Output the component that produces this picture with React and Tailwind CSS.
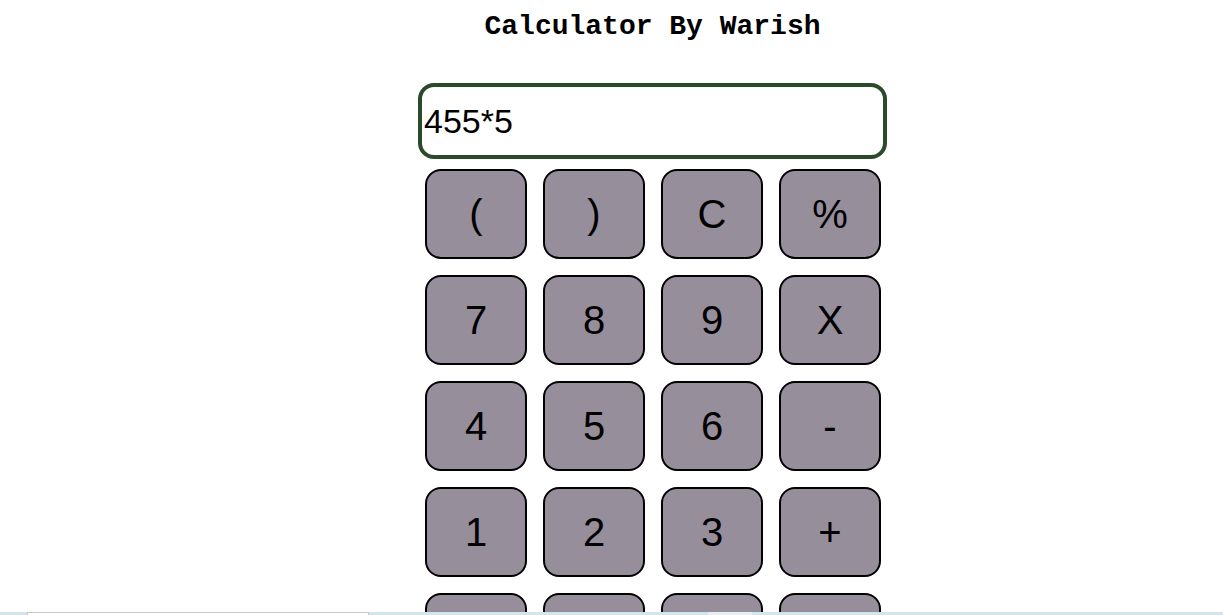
import React, { useState } from 'react';

const keys = ['(', ')', 'C', '%', '7', '8', '9', 'X', '4', '5', '6', '-', '1', '2', '3', '+', '0', '.', '=', '/'];

function App() {
  const [value, setValue] = useState('455*5');

  return (
    <div className="min-h-screen w-full bg-white text-black">
      <div className="w-[469px] ml-[418px]">
        <h1 className="text-center font-bold text-[28px] leading-[34px] pt-[10px] font-['Courier_New','Liberation_Mono',monospace]">
          Calculator By Warish
        </h1>
        <input
          value={value}
          onChange={(e) => setValue(e.target.value)}
          className="mt-[39px] block w-[469px] h-[76px] border-4 border-[#2a4a2a] rounded-[16px] px-[2px] text-[34px] outline-none font-['Arial','Liberation_Sans',sans-serif]"
        />
        <div className="mt-[10px] ml-[7px] grid grid-cols-4 w-[456px] gap-x-[16px] gap-y-[16px]">
          {keys.map((k) => (
            <button
              key={k}
              className="h-[90px] w-[102px] bg-[#978e9c] border-2 border-black rounded-[16px] text-[40px] font-['Arial','Liberation_Sans',sans-serif]"
            >
              {k}
            </button>
          ))}
        </div>
      </div>
      <div className="fixed bottom-0 left-0 w-full h-[3px] bg-[#d3e5ec] flex">
        <div className="ml-[27px] w-[342px] h-[3px] bg-white border-t border-x border-[#c8c8c8]"></div>
        <div className="ml-[339px] w-[44px] h-[3px] bg-[#e4f0f4]"></div>
      </div>
    </div>
  );
}

export default App;
